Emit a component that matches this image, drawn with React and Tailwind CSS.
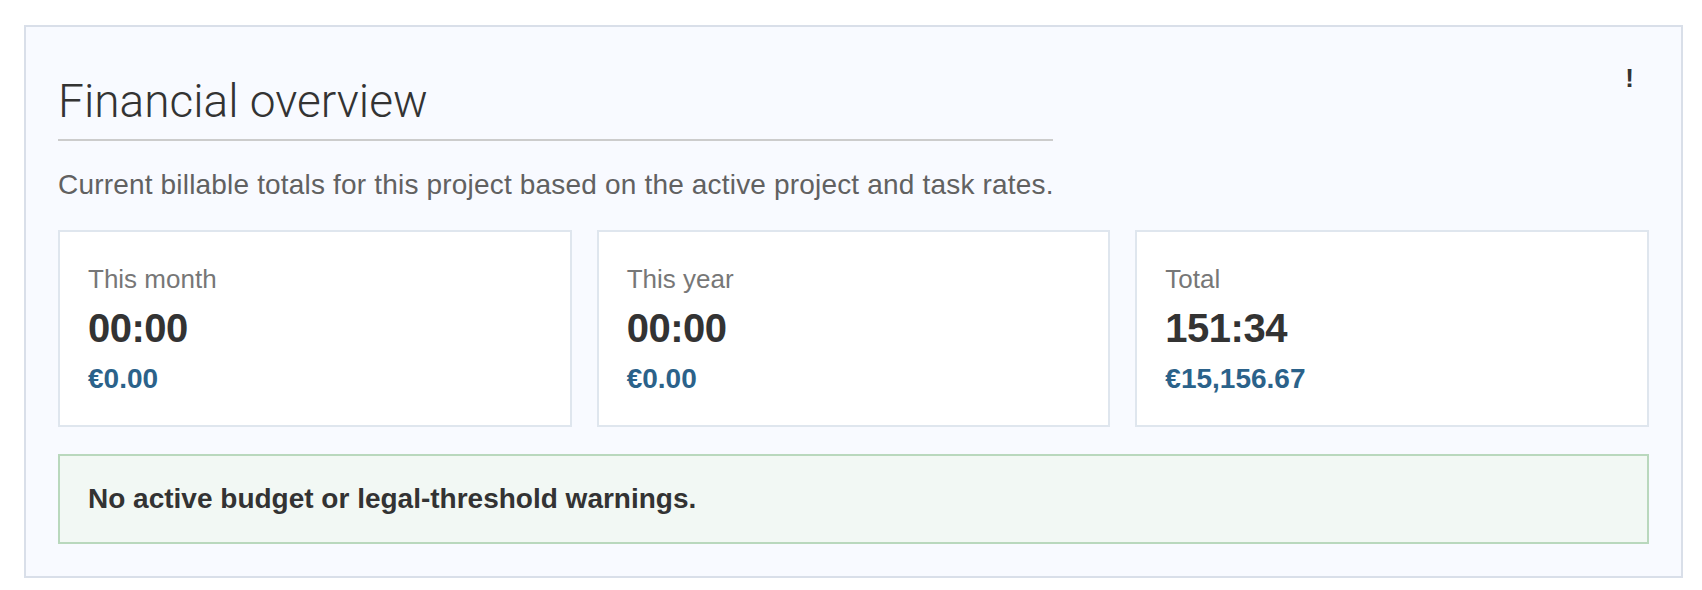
import React from 'react';

// --- Billable totals per period ---
const periods = [
  { label: 'This month', hours: '00:00', amount: '€0.00' },
  { label: 'This year', hours: '00:00', amount: '€0.00' },
  { label: 'Total', hours: '151:34', amount: '€15,156.67' },
];

const StatCard = ({ label, hours, amount }) => (
  <div className="bg-white border-2 border-[#dfe6ee] px-[28px] pt-[28px] pb-[28px]">
    <div className="text-[26px] leading-[38px] text-[#777777]">{label}</div>
    <div className="mt-2 text-[40px] leading-[44px] font-bold text-[#333333] tracking-[-0.5px]">{hours}</div>
    <div className="mt-[11px] text-[28px] leading-[36px] font-bold text-[#2b628a]">{amount}</div>
  </div>
);

export default function App() {
  return (
    <div className="bg-white min-h-[590px] pt-[25px] pl-[24px] font-['Liberation_Sans',Arial,sans-serif]">
      <section className="relative w-[1659px] bg-[#f8faff] border-2 border-[#d9dfe9] p-8">
        {/* warning trigger, top right */}
        <span className="absolute top-[38px] right-[47px] text-[26px] leading-none font-bold text-[#333333]">!</span>

        {/* HEADER */}
        <div className="w-[995px] mt-[13px] pb-[9px] border-b-2 border-[#cccccc]">
          <h2 className="font-['Roboto',sans-serif] font-light text-[46px] leading-[58px] text-[#333333]">
            Financial overview
          </h2>
        </div>
        <p className="mt-6 text-[28px] leading-[40px] tracking-[0.18px] text-[#616161]">
          Current billable totals for this project based on the active project and task rates.
        </p>

        {/* PERIOD CARDS */}
        <div className="mt-[25px] grid grid-cols-3 gap-[25px]">
          {periods.map((p) => (
            <StatCard key={p.label} {...p} />
          ))}
        </div>

        {/* STATUS */}
        <div className="mt-[27px] bg-[#f2f8f4] border-2 border-[#b9d8bd] px-[28px] py-[28px]">
          <p className="text-[28px] leading-[30px] font-bold text-[#333333]">
            No active budget or legal-threshold warnings.
          </p>
        </div>
      </section>
    </div>
  );
}
